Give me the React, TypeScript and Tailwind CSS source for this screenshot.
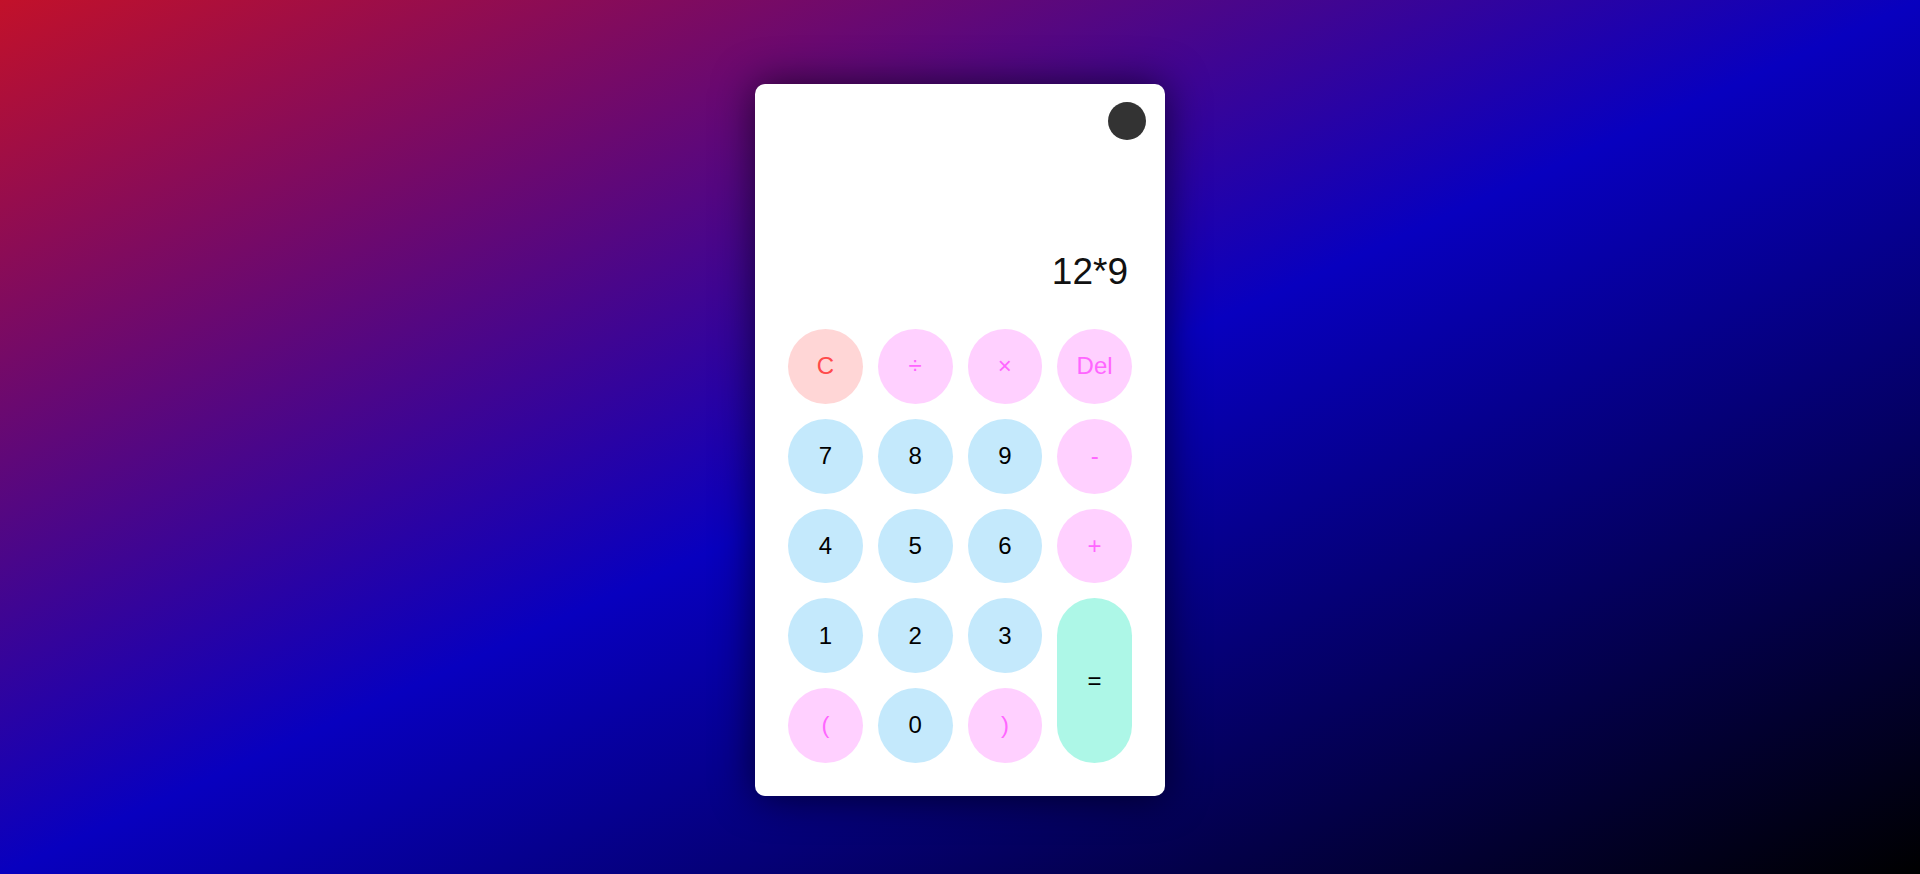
import React from 'react'

type Key = {
  label: string
  kind: 'clear' | 'op' | 'num' | 'eq'
}

const keys: Key[] = [
  { label: 'C', kind: 'clear' },
  { label: '÷', kind: 'op' },
  { label: '×', kind: 'op' },
  { label: 'Del', kind: 'op' },
  { label: '7', kind: 'num' },
  { label: '8', kind: 'num' },
  { label: '9', kind: 'num' },
  { label: '-', kind: 'op' },
  { label: '4', kind: 'num' },
  { label: '5', kind: 'num' },
  { label: '6', kind: 'num' },
  { label: '+', kind: 'op' },
  { label: '1', kind: 'num' },
  { label: '2', kind: 'num' },
  { label: '3', kind: 'num' },
  { label: '=', kind: 'eq' },
  { label: '(', kind: 'op' },
  { label: '0', kind: 'num' },
  { label: ')', kind: 'op' },
]

const styles: Record<Key['kind'], string> = {
  clear: 'bg-[#ffd6d6] text-[#ff4b4b] aspect-square',
  op: 'bg-[#ffd0ff] text-[#ff66ff] aspect-square',
  num: 'bg-[#c4e9fc] text-black aspect-square',
  eq: 'bg-[#adf7e7] text-black row-span-2',
}

const App = () => {
  return (
    <div
      className="w-full h-[874px] pt-[6px] flex items-center justify-center bg-[linear-gradient(to_bottom_right,#c2112a,#0800bf,#000000)]"
      style={{ fontFamily: '"Liberation Sans", Arial, sans-serif' }}
    >
      <div className="w-[410px] h-[712px] bg-white rounded-[10px] shadow-[0_0_40px_rgba(0,0,0,0.65)] flex flex-col">
        {/* Theme toggle */}
        <div className="flex justify-end pt-[18px] pr-[19px]">
          <div className="w-[38px] h-[38px] rounded-full bg-[#333333]" />
        </div>

        {/* Display */}
        <div className="mt-[112px] h-[40px] pr-[37px] text-right text-[37px] leading-[40px] text-[#111]">
          12*9
        </div>

        {/* Keypad */}
        <div className="mt-[37px] px-[33px] grid grid-cols-4 gap-[15px]">
          {keys.map((k) => (
            <button
              key={k.label}
              className={`rounded-full flex items-center justify-center text-[24px] ${styles[k.kind]}`}
            >
              {k.label}
            </button>
          ))}
        </div>
      </div>
    </div>
  )
}

export default App
